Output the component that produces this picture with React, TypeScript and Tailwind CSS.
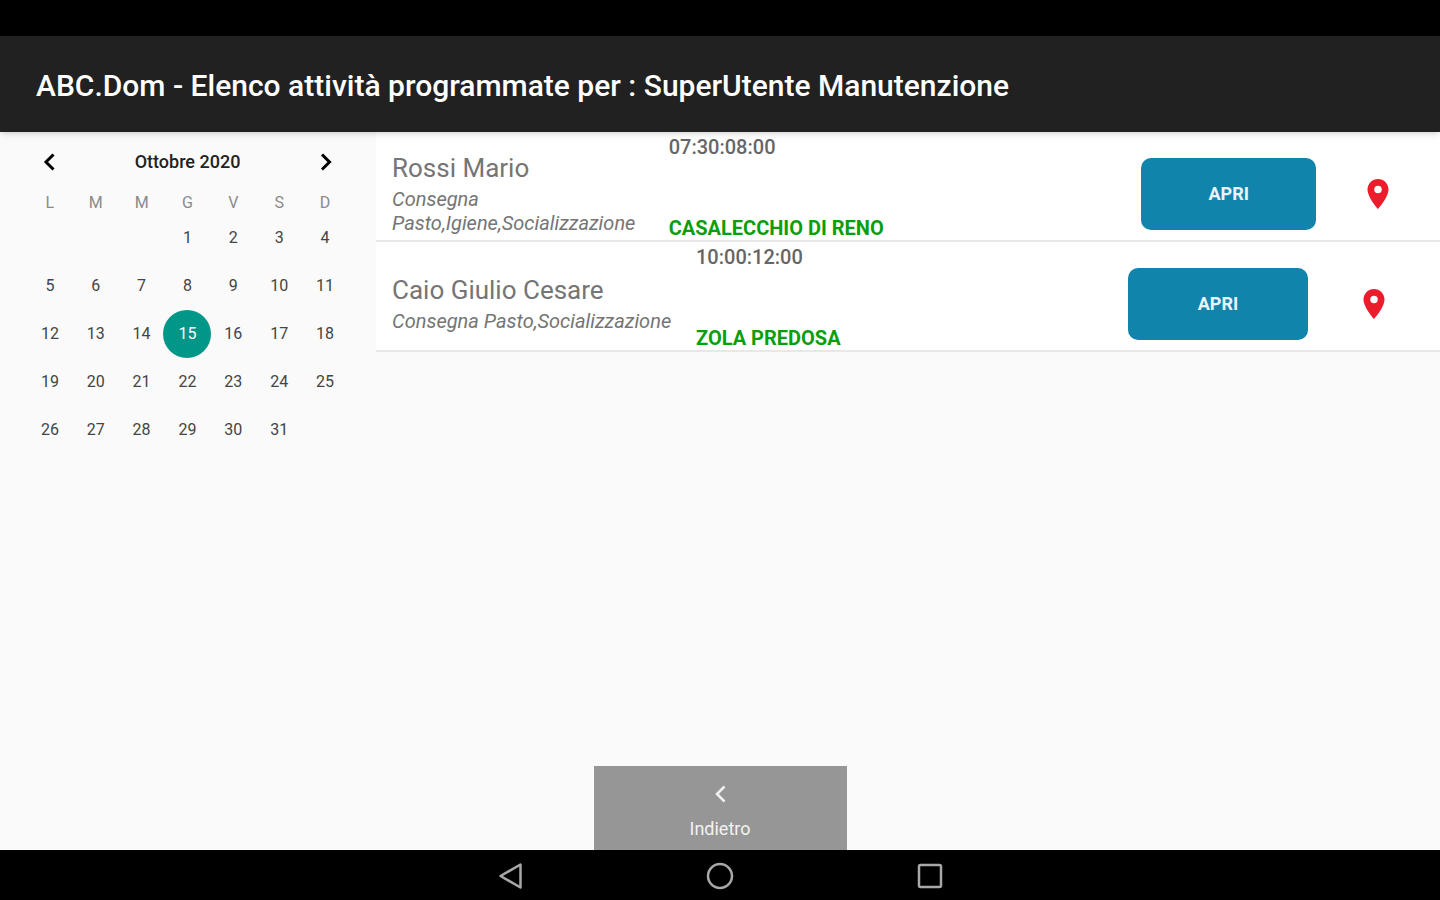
import { useState } from 'react';
import { MdLocationOn } from 'react-icons/md';

interface Activity {
  id: number;
  name: string;
  services: string;
  time: string;
  place: string;
  columns: string;
}

const ACTIVITIES: Activity[] = [
  {
    id: 1,
    name: 'Rossi Mario',
    services: 'Consegna Pasto,Igiene,Socializzazione',
    time: '07:30:08:00',
    place: 'CASALECCHIO DI RENO',
    columns: 'grid-cols-[277fr_473fr_175fr_124fr]',
  },
  {
    id: 2,
    name: 'Caio Giulio Cesare',
    services: 'Consegna Pasto,Socializzazione',
    time: '10:00:12:00',
    place: 'ZOLA PREDOSA',
    columns: 'grid-cols-[304fr_432fr_180fr_132fr]',
  },
];

const WEEKDAYS = ['L', 'M', 'M', 'G', 'V', 'S', 'D'];
const FIRST_OFFSET = 3; // 1 October 2020 is a Thursday
const DAYS_IN_MONTH = 31;

const WEEKS = Array.from({ length: 5 }, (_, week) =>
  Array.from({ length: 7 }, (_, i) => {
    const day = week * 7 + i - FIRST_OFFSET + 1;
    return day >= 1 && day <= DAYS_IN_MONTH ? day : null;
  })
);

function Chevron({ direction, className }: { direction: 'left' | 'right'; className: string }) {
  return (
    <svg viewBox="0 0 12 18" className={className} fill="none" stroke="currentColor" aria-hidden="true">
      <path d={direction === 'left' ? 'M10.5 1.5 3 9l7.5 7.5' : 'M2 1.5 9.5 9 2 16.5'} />
    </svg>
  );
}

function Calendar() {
  const [selected, setSelected] = useState(15);

  return (
    <section className="w-[376px] shrink-0 pl-[27px] pr-7" aria-label="Calendario">
      <div className="flex h-[60px] items-center justify-between px-4">
        <button aria-label="Mese precedente">
          <Chevron direction="left" className="h-[18px] w-3 stroke-[3]" />
        </button>
        <h2 className="text-lg font-medium text-[#222]">Ottobre 2020</h2>
        <button aria-label="Mese successivo">
          <Chevron direction="right" className="h-[18px] w-3 stroke-[3]" />
        </button>
      </div>

      <table className="w-full table-fixed">
        <thead>
          <tr className="h-[22px]">
            {WEEKDAYS.map((d, i) => (
              <th key={i} scope="col" className="p-0 text-base leading-5 font-normal text-[#8a8a8a]">
                {d}
              </th>
            ))}
          </tr>
        </thead>
        <tbody>
          {WEEKS.map((week, w) => (
            <tr key={w}>
              {week.map((day, i) => (
                <td key={i} className="p-0">
                  {day && (
                    <div className="flex justify-center">
                      <button
                        onClick={() => setSelected(day)}
                        className={`h-12 w-12 shrink-0 rounded-full text-base ${
                          day === selected ? 'bg-[#009688] text-white' : 'text-[#444]'
                        }`}
                      >
                        {day}
                      </button>
                    </div>
                  )}
                </td>
              ))}
            </tr>
          ))}
        </tbody>
      </table>
    </section>
  );
}

function ActivityRow({ activity }: { activity: Activity }) {
  return (
    <li className={`grid min-h-[110px] border-b-2 border-[#e8e8e8] bg-white pl-4 ${activity.columns}`}>
      <div className="flex flex-col justify-center gap-1 pt-4">
        <h3 className="text-[26px] leading-[30px] text-[#757575]">{activity.name}</h3>
        <p className="text-xl leading-6 text-[#757575] italic">{activity.services}</p>
      </div>
      <div className="flex flex-col justify-between pt-[3px] text-xl leading-6">
        <p className="font-medium text-[#666]">{activity.time}</p>
        <p className="font-bold text-[#0a9f0a]">{activity.place}</p>
      </div>
      <div className="pt-[26px] pb-[10px]">
        <button className="h-[72px] w-full rounded-[10px] bg-[#1184ab] text-lg font-bold text-[#e8f4f8]">APRI</button>
      </div>
      <div className="flex items-center justify-center pt-4">
        <button aria-label={`Mappa ${activity.place}`}>
          <MdLocationOn className="size-9 text-[#ec1c2c]" />
        </button>
      </div>
    </li>
  );
}

function NavigationBar() {
  return (
    <nav className="flex h-[50px] items-center justify-center gap-[182px] bg-black pt-0.5 text-[#a8a8a8]">
      <button aria-label="Indietro di sistema">
        <svg viewBox="0 0 28 28" className="size-7" fill="none" stroke="currentColor" strokeWidth="2.5" strokeLinejoin="round">
          <path d="M24.5 2.5v23L4.5 14z" />
        </svg>
      </button>
      <button aria-label="Home">
        <svg viewBox="0 0 28 28" className="size-7" fill="none" stroke="currentColor" strokeWidth="2.5">
          <circle cx="14" cy="14" r="12" />
        </svg>
      </button>
      <button aria-label="App recenti">
        <svg viewBox="0 0 28 28" className="size-7" fill="none" stroke="currentColor" strokeWidth="2.5">
          <rect x="3" y="3" width="22" height="22" rx="1.5" />
        </svg>
      </button>
    </nav>
  );
}

export default function App() {
  return (
    <div className="flex min-h-screen flex-col bg-[#fafafa] font-['Roboto',sans-serif]">
      <div className="h-9 bg-black" />
      <header className="z-10 flex h-24 items-center bg-[#212121] px-9 pt-1 shadow-md">
        <h1 className="text-[30px] leading-9 font-medium text-white">
          ABC.Dom - Elenco attività programmate per : SuperUtente Manutenzione
        </h1>
      </header>

      <main className="flex flex-1 flex-col">
        <div className="flex flex-1">
          <Calendar />
          <ul className="flex-1">
            {ACTIVITIES.map((a) => (
              <ActivityRow key={a.id} activity={a} />
            ))}
          </ul>
        </div>
        <button className="flex h-[84px] w-[253px] flex-col items-center justify-center gap-3.5 self-center bg-[#969696] pt-2.5 text-[#f2f2f2]">
          <Chevron direction="left" className="h-[18px] w-3 stroke-[2.5]" />
          <span className="text-lg leading-6">Indietro</span>
        </button>
      </main>

      <NavigationBar />
    </div>
  );
}
